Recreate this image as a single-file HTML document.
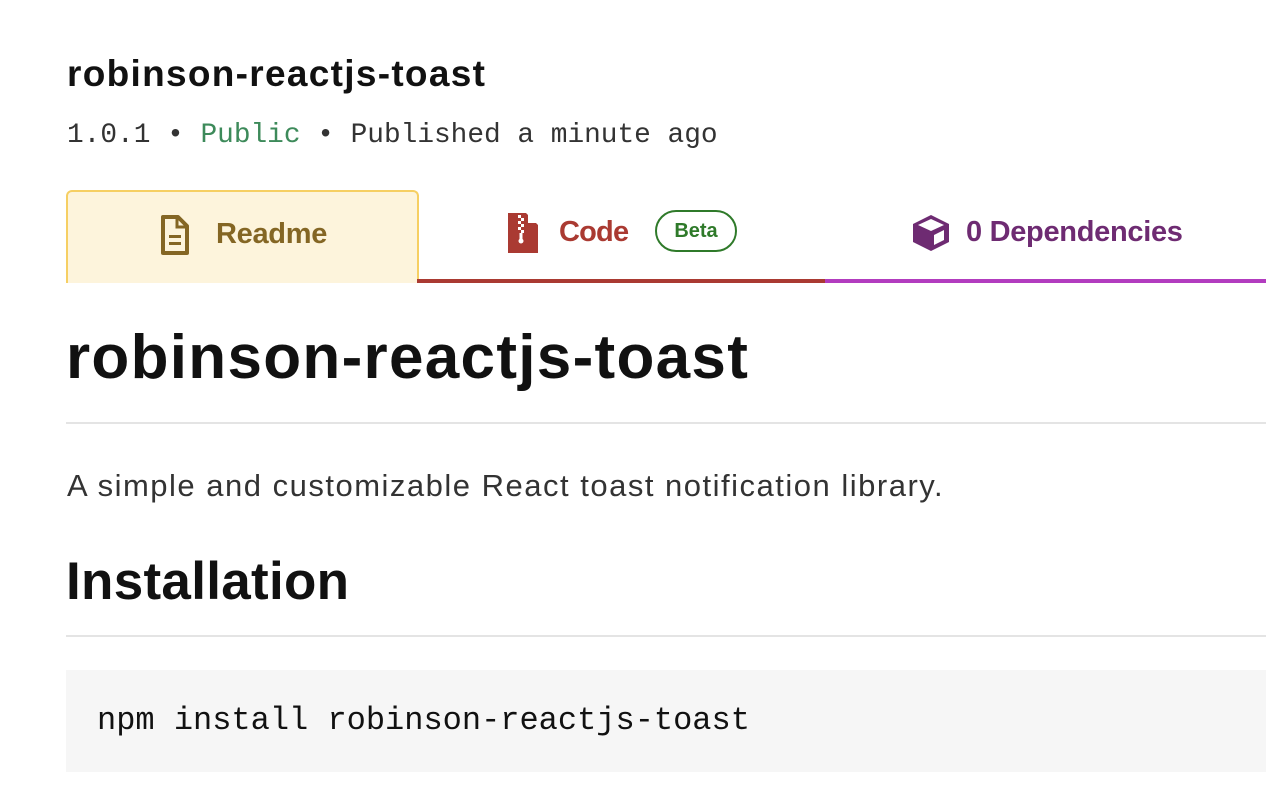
<!DOCTYPE html>
<html><head><meta charset="utf-8"><style>
body{margin:0;background:#fff;width:1266px;height:810px;overflow:hidden;font-family:"Liberation Sans",sans-serif;color:#1a1a1a;position:relative}
.a{position:absolute;white-space:nowrap}
</style></head><body>
<div class="a" style="left:67px;top:53px;font-size:37px;font-weight:bold;letter-spacing:1.3px;color:#111">robinson-reactjs-toast</div>
<div class="a" style="left:67px;top:120px;font-family:'Liberation Mono',monospace;font-size:27.8px;color:#333">1.0.1 • <span style="color:#3d8a5a">Public</span> • Published a minute ago</div>

<div class="a" style="left:66px;top:190px;width:349px;height:91px;background:#fdf4dc;border:2px solid #f6cf63;border-bottom:none;border-radius:6px 6px 0 0"></div>
<div class="a" style="left:417px;top:279px;width:408px;height:4px;background:#aa3a32"></div>
<div class="a" style="left:825px;top:279px;width:441px;height:4px;background:#b23cbf"></div>

<svg class="a" style="left:160px;top:215px" width="30" height="40" viewBox="0 0 30 40"><path d="M3 2h15l9 9v27H3z" fill="none" stroke="#846624" stroke-width="4" stroke-linejoin="round"/><path d="M17 2v10h10" fill="none" stroke="#846624" stroke-width="3"/><rect x="9" y="20" width="12" height="3" fill="#846624"/><rect x="9" y="27" width="12" height="3" fill="#846624"/></svg>
<div class="a" style="left:216px;top:218px;font-size:29px;font-weight:bold;color:#846624;letter-spacing:-0.3px">Readme</div>

<svg class="a" style="left:508px;top:213px" width="30" height="40" viewBox="0 0 30 40"><path d="M0 0h18l12 12v28H0z" fill="#aa3a32"/><path d="M20 0v10h10z" fill="#fff"/><path d="M10 2h3v3h-3zM13 5h3v3h-3zM10 8h3v3h-3zM13 11h3v3h-3zM10 14h3v3h-3zM13 17h3v3h-3z" fill="#fff"/><circle cx="13" cy="28" r="2.5" fill="#fff"/><rect x="11.5" y="20" width="3" height="7" fill="#fff"/></svg>
<div class="a" style="left:559px;top:216px;font-size:29px;font-weight:bold;color:#aa3a32;letter-spacing:-0.8px">Code</div>
<div class="a" style="left:655px;top:210px;width:82px;height:42px;border:2px solid #2f7a2a;border-radius:21px;box-sizing:border-box;text-align:center;line-height:38px;font-size:20px;font-weight:bold;color:#2f7a2a">Beta</div>

<svg class="a" style="left:912px;top:214px" width="38" height="38" viewBox="0 0 38 38"><path d="M19 1L37 10v18L19 37 1 28V10z" fill="#6e2b72"/><path d="M6 11l13-6 13 6-13 6z" fill="#fff"/><path d="M22 21l10-5v10l-10 5z" fill="#fff"/></svg>
<div class="a" style="left:966px;top:216px;font-size:29px;font-weight:bold;color:#6e2b72;letter-spacing:-0.3px">0 Dependencies</div>

<div class="a" style="left:66px;top:322px;font-size:62px;font-weight:bold;letter-spacing:1.3px;color:#111">robinson-reactjs-toast</div>
<div class="a" style="left:66px;top:422px;width:1200px;height:2px;background:#e4e4e4"></div>
<div class="a" style="left:67px;top:468px;font-size:31px;color:#333;letter-spacing:1.5px">A simple and customizable React toast notification library.</div>
<div class="a" style="left:66px;top:551px;font-size:53px;font-weight:bold;letter-spacing:0.3px;color:#111">Installation</div>
<div class="a" style="left:66px;top:635px;width:1200px;height:2px;background:#e4e4e4"></div>
<div class="a" style="left:66px;top:670px;width:1200px;height:102px;background:#f6f6f6"></div>
<div class="a" style="left:97px;top:702px;font-family:'Liberation Mono',monospace;font-size:32px;color:#111">npm install robinson-reactjs-toast</div>
</body></html>
